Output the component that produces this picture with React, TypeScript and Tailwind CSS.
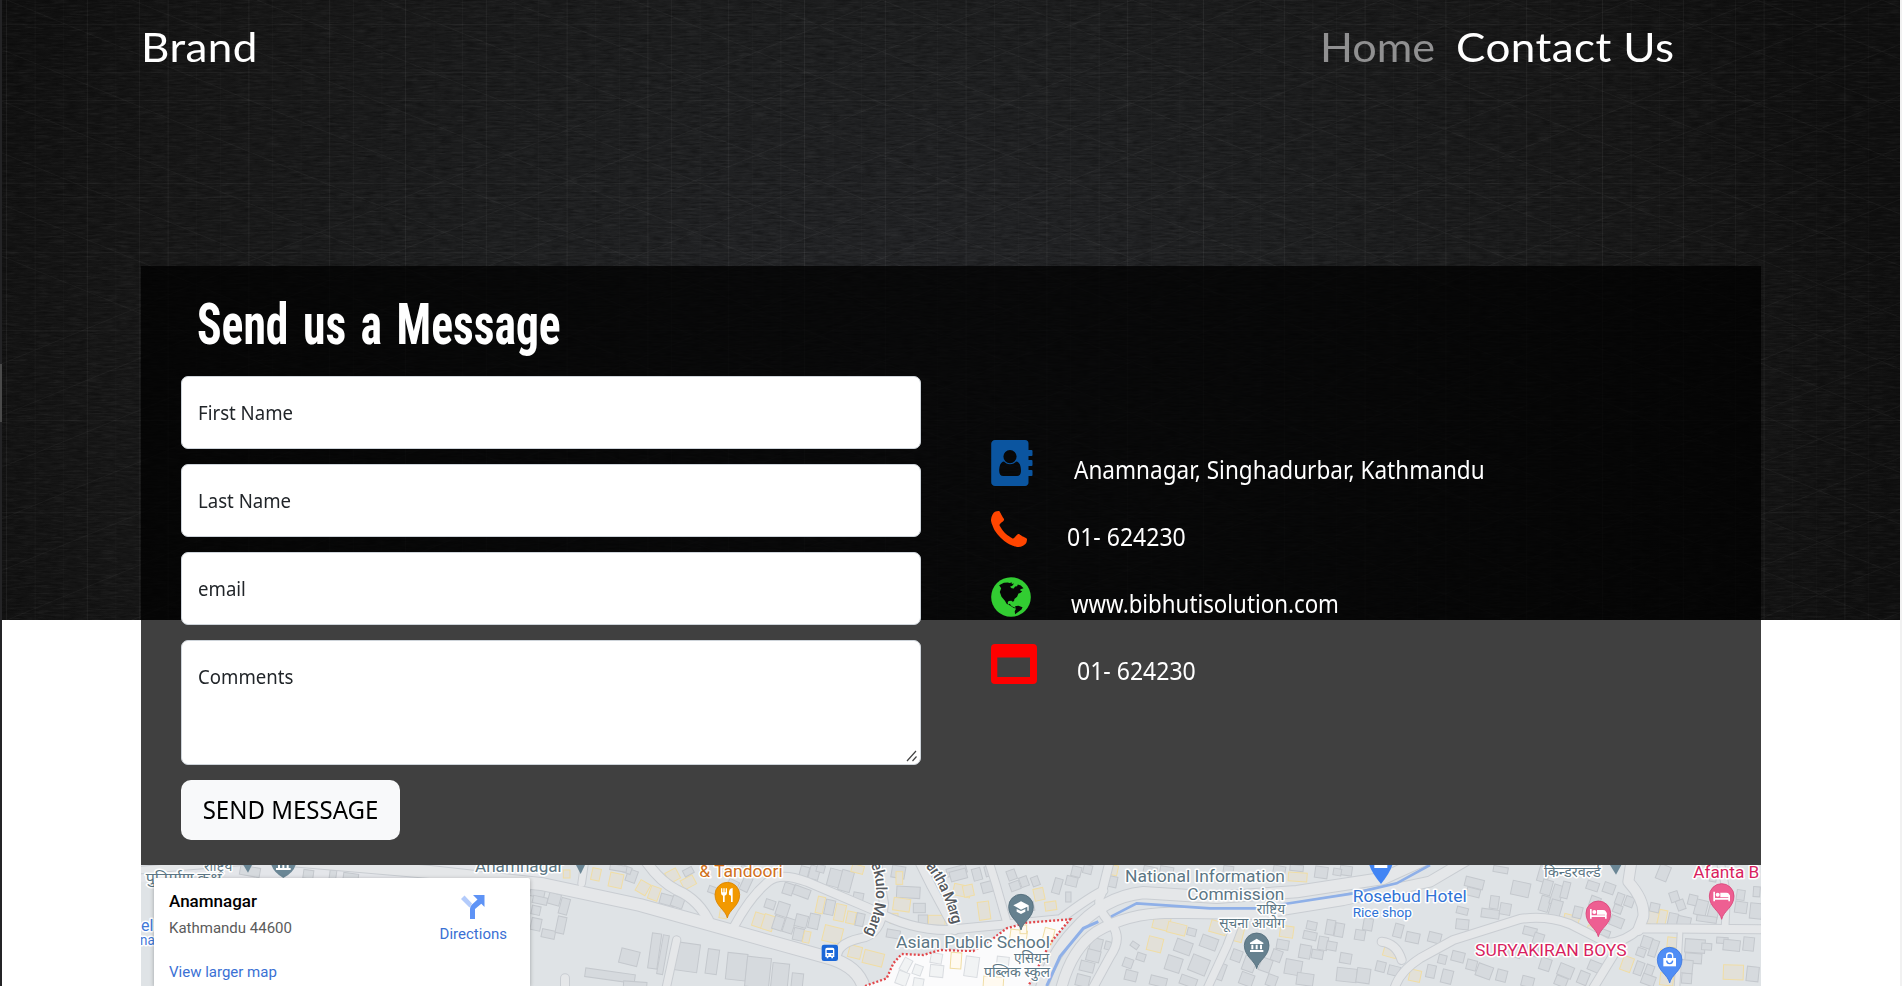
import React from "react";

/* ---------- hero backdrop ---------- */

const threads = Array.from({ length: 71 }, (_, i) => ({
  x: 4 + i * 26.6 + ((i * 7) % 5),
  o: i % 3 === 0 ? 0.055 : i % 4 === 1 ? 0.035 : 0.02,
}));

const weave = Array.from({ length: 22 }, (_, i) => i * 125 - 620);

function Backdrop() {
  return (
    <svg className="block h-full w-full" viewBox="0 0 1898 620" preserveAspectRatio="none">
      <defs>
        <radialGradient id="glow" gradientUnits="userSpaceOnUse" cx="900" cy="400" r="1000" gradientTransform="translate(0 80) scale(1 0.8)">
          <stop offset="0" stopColor="#252629" />
          <stop offset="0.45" stopColor="#1e1f20" />
          <stop offset="0.8" stopColor="#171717" />
          <stop offset="1" stopColor="#101010" />
        </radialGradient>
        <filter id="grain" x="0" y="0" width="100%" height="100%">
          <feTurbulence type="fractalNoise" baseFrequency="0.06 0.55" numOctaves="3" seed="4" />
          <feColorMatrix values="0 0 0 0 1  0 0 0 0 1  0 0 0 0 1  1.6 0 0 0 -0.7" />
        </filter>
        <filter id="shade" x="0" y="0" width="100%" height="100%">
          <feTurbulence type="fractalNoise" baseFrequency="0.08 0.5" numOctaves="3" seed="11" />
          <feColorMatrix values="0 0 0 0 0  0 0 0 0 0  0 0 0 0 0  1.6 0 0 0 -0.7" />
        </filter>
      </defs>
      <rect width="1898" height="620" fill="url(#glow)" />
      <rect width="1898" height="620" filter="url(#grain)" opacity="0.06" />
      <rect width="1898" height="620" filter="url(#shade)" opacity="0.4" />
      {threads.map((t) => (
        <rect key={t.x} x={t.x} y="0" width="1" height="620" fill="#fff" opacity={t.o} />
      ))}
      {[24, 72, 100, 183, 197, 252, 330, 420, 512].map((y) => (
        <rect key={y} y={y} width="1898" height="1" fill="#fff" opacity="0.03" />
      ))}
      <g stroke="#fff" strokeWidth="1" opacity="0.03">
        {weave.map((x) => (
          <g key={x}>
            <line x1={x} y1="0" x2={x + 1500} y2="620" />
            <line x1={x} y1="620" x2={x + 1500} y2="0" />
          </g>
        ))}
      </g>
    </svg>
  );
}

/* ---------- contact icons ---------- */

function BookIcon() {
  return (
    <svg className="h-[46px] w-[42px]" viewBox="0 0 42 46">
      <path
        fill="#0b55a0"
        fillRule="evenodd"
        d="M4 0H34a3.5 3.5 0 0 1 3.500 3.500V10H40.500a1 1 0 0 1 1 1V15a1 1 0 0 1-1 1H37.500V20H40.500a1 1 0 0 1 1 1V25a1 1 0 0 1-1 1H37.500V30H40.500a1 1 0 0 1 1 1V35a1 1 0 0 1-1 1H37.500V42A3.500 3.500 0 0 1 34 46H4A3.800 3.800 0 0 1 .2 42V4A3.800 3.800 0 0 1 4 0ZM19 10a6.600 6.600 0 1 0 0 13.200A6.600 6.600 0 0 0 19 10ZM13 21.500C9.500 22 8.200 26 8.200 31c0 3 1.500 5 4 5H26c2.500 0 4-2 4-5 0-5-1.300-9-4.800-9.500C23.800 23 21.800 24.300 19 24.300S14.400 23 13 21.500Z"
      />
    </svg>
  );
}

function PhoneIcon() {
  return (
    <svg className="h-[36px] w-[36px]" viewBox="0 128 1408 1408">
      <path
        fill="#ff4500"
        transform="translate(0 128)"
        d="M1408 1112q0 27-10 70.500t-21 68.500q-21 50-122 106-94 51-186 51-27 0-53-3.500t-57.500-12.500-47-14.500-55.500-20.500-49-18q-98-35-175-83-127-79-264-216t-216-264q-48-77-83-175-3-9-18-49t-20.500-55.500-14.500-47-12.500-57.500-3.500-53q0-92 51-186 56-101 106-122 25-11 68.500-21t70.500-10q14 0 21 3 18 6 53 76 11 19 30 54t35 63.500 31 53.500q3 4 17.500 25t21.500 35.500 7 28.500q0 20-28.500 50t-62 55-62 53-28.500 46q0 9 5 22.500t8.500 20.500 14 24 11.500 19q76 137 174 235t235 174q2 1 19 11.500t24 14 20.500 8.500 22.500 5q18 0 46-28.500t53-62 55-62 50-28.500q14 0 28.500 7t35.500 21.500 25 17.500q25 15 53.500 31t63.500 35 54 30q70 35 76 53 3 7 3 21z"
      />
    </svg>
  );
}

function GlobeIcon() {
  return (
    <svg className="h-[40px] w-[40px]" viewBox="0 0 118 118">
      <circle cx="59" cy="59" r="58.500" fill="#32cd32" />
      <path
        fill="#070707"
        d="M24 24l14-7 12-1 4 2 8-2-1 5 7-2-5 7-7 3 5 4 6 1 4-6 6-1 2-5 9 3 8 8-9 3-1 4 6 2-6 5-5 2-4 9-8 7-1 6-4 2-4-3-8 1-3 5 2 5 5-2 2 4 6 5 5 1 3 4-6-2-10-7-10-5-5-9-10-12-5-14 4-11z M71 86l10-1 12 4-3 7-11 8-8 6-1-9 3-6z"
      />
    </svg>
  );
}

function WindowIcon() {
  return (
    <svg className="h-[40px] w-[46px]" viewBox="0 0 46 40">
      <path fill="#f00" fillRule="evenodd" d="M4 0H42a4 4 0 0 1 4 4V36a4 4 0 0 1-4 4H4a4 4 0 0 1-4-4V4A4 4 0 0 1 4 0ZM6.300 13.500V33H39V13.500Z" />
    </svg>
  );
}

/* ---------- map ---------- */

const roads: { d: string; w: number }[] = [
  { d: "M33 60 L400 30", w: 20 },
  { d: "M480 30 L900 66 L1240 103 L1530 165 L1780 235 L2090 322 Q2195 350 2205 430", w: 36 },
  { d: "M1365 30 L1355 100", w: 20 },
  { d: "M1545 30 Q1590 95 1640 120 Q1710 150 1742 225", w: 28 },
  { d: "M1812 230 Q1860 140 1915 95 Q1950 65 2030 95 L2230 180 Q2340 240 2450 240 L2600 226 L2790 208 Q2880 140 2920 122", w: 24 },
  { d: "M2240 30 L2262 160 Q2255 255 2190 265 Q2120 280 2120 325", w: 24 },
  { d: "M2365 30 L2405 110 L2475 240", w: 24 },
  { d: "M2575 30 L2600 110 L2630 215", w: 22 },
  { d: "M2730 430 Q2760 320 2830 245 Q2920 140 3040 128 L3260 142 L3500 125 L3760 85 L3880 30", w: 34 },
  { d: "M2790 430 Q2820 300 2900 245 Q2990 190 3120 188 L3380 192 L3640 150 L3900 95 L4010 30", w: 30 },
  { d: "M2940 30 L2915 130 Q2890 170 2950 230 Q2975 270 2940 320 L2880 430", w: 24 },
  { d: "M3320 210 L3290 290 L3225 430", w: 22 },
  { d: "M3755 275 Q3800 280 3815 330", w: 24 },
  { d: "M3790 430 Q3800 370 3870 325 L3970 270 L4170 207 Q4250 195 4320 222 L4430 278 Q4480 280 4530 235 L4893 238", w: 24 },
  { d: "M4505 30 L4495 95 Q4545 150 4540 200 L4525 240", w: 30 },
  { d: "M4475 275 L4380 430", w: 24 },
  { d: "M4785 238 L4790 130 L4770 30", w: 20 },
  { d: "M4640 430 L4650 250", w: 14 },
  { d: "M1640 270 L1605 430", w: 22 },
  { d: "M1305 385 L1305 430", w: 24 },
  { d: "M2460 310 L2455 380", w: 24 },
  { d: "M2510 310 L2515 430", w: 30 },
];

// x, y, width, height, rotation, 1 = yellow commercial block
type Block = [number, number, number, number, number, number?];

const blocks: Block[] = [
  [330, 50, 60, 28, 10], [520, 60, 30, 26, 8], [598, 60, 20, 40, 8], [640, 70, 45, 20, 8],
  [1200, 115, 44, 26, 12], [1208, 140, 44, 22, 12], [1205, 168, 26, 26, 12], [1255, 130, 36, 34, 15], [1290, 145, 26, 48, 15], [1203, 205, 30, 36, 12], [1235, 240, 40, 24, 12], [1280, 200, 26, 50, 12], [1300, 60, 20, 24, 0, 1],
  [1385, 55, 26, 36, 12, 1], [1438, 70, 40, 42, 12, 1], [1490, 60, 30, 36, 20], [1522, 95, 34, 36, 30, 1], [1558, 110, 30, 40, 20, 1], [1480, 50, 24, 20, 20], [1590, 135, 46, 30, 15], [1625, 140, 36, 32, 20], [1440, 45, 50, 18, 10],
  [1610, 60, 36, 34, -28, 1], [1655, 82, 40, 30, -28, 1], [1660, 55, 30, 20, -28], [1735, 110, 26, 20, 20], [1790, 90, 32, 40, 25], [1835, 80, 26, 44, 25], [1770, 165, 24, 40, 10, 1], [1830, 50, 34, 26, 25],
  [2010, 50, 26, 30, 15], [2038, 48, 30, 40, 15], [2095, 58, 38, 52, 15], [2130, 62, 36, 62, 15], [2165, 45, 36, 24, 15, 1], [2170, 128, 30, 24, 10], [2060, 45, 24, 22, 15],
  [1960, 100, 30, 34, 18], [1990, 112, 50, 28, 20], [1905, 150, 30, 26, 18], [1940, 158, 36, 40, 18], [1870, 190, 36, 42, 18, 1], [1898, 195, 34, 46, 18, 1], [1930, 200, 30, 40, 18], [1962, 205, 30, 44, 18], [1996, 195, 36, 36, 14], [1990, 235, 30, 36, 12], [2020, 244, 20, 34, 12, 1], [2060, 140, 22, 50, 12, 1], [2085, 150, 28, 44, 12], [2115, 163, 30, 50, 12, 1], [2037, 192, 30, 44, 12], [2150, 185, 26, 36, 12, 1], [2178, 190, 24, 38, 12], [2080, 230, 56, 48, 14, 1], [2156, 288, 38, 36, 14, 1], [2200, 305, 60, 40, 14, 1],
  [1560, 250, 28, 106, 8], [1590, 255, 18, 118, 10], [1470, 300, 56, 44, 14], [1365, 364, 150, 26, 8], [1638, 280, 68, 84, 8], [1730, 298, 34, 74, 8], [1790, 310, 60, 80, 6], [1848, 322, 72, 90, 6], [1925, 340, 50, 80, 6], [1984, 370, 34, 60, 6], [1480, 395, 70, 30, 4],
  [2285, 48, 40, 36, 10], [2298, 65, 20, 38, 0, 1], [2300, 110, 70, 34, 3], [2290, 145, 50, 38, 8, 1], [2350, 160, 36, 28, 0], [2280, 190, 24, 30, 0, 1], [2365, 195, 28, 34, 0], [2395, 196, 50, 34, 0, 1], [2270, 240, 40, 24, 10], [2405, 55, 20, 30, -15], [2450, 50, 60, 24, -15], [2470, 105, 52, 34, 12, 1], [2460, 60, 50, 30, -15],
  [2528, 55, 26, 36, -15], [2555, 95, 36, 32, -15], [2545, 155, 34, 54, -8, 1], [2500, 105, 30, 34, -12, 1], [2565, 48, 22, 30, -15], [2632, 60, 26, 30, -20], [2640, 95, 30, 26, -20], [2670, 80, 24, 30, -20], [2705, 80, 22, 28, -20], [2712, 115, 30, 36, -12, 1], [2745, 155, 34, 26, -8, 1], [2770, 85, 24, 46, 16], [2825, 50, 28, 30, 14], [2808, 80, 34, 28, 14], [2807, 126, 16, 30, 0], [2690, 155, 22, 28, -12], [2860, 45, 26, 26, 14],
  [2935, 45, 28, 30, 12, 1], [2925, 78, 36, 32, 12], [3040, 50, 40, 26, 12], [3090, 50, 40, 24, 10], [3430, 48, 36, 24, 10], [3475, 68, 56, 26, 4, 1], [3555, 50, 38, 34, 8], [3630, 48, 36, 28, 8], [3280, 48, 30, 26, 8], [3480, 45, 40, 18, 6], [3610, 56, 24, 20, 10],
  [3070, 195, 50, 44, 14, 1], [3112, 220, 56, 32, 14, 1], [3172, 235, 26, 22, 14], [3053, 262, 44, 42, 14, 1], [3135, 272, 50, 38, 20], [3108, 320, 46, 44, 18], [3180, 320, 54, 50, 22], [3212, 260, 50, 36, 20], [3240, 215, 50, 36, 16, 1], [3310, 225, 30, 50, 14, 1], [3260, 340, 24, 50, 20], [3002, 278, 24, 16, 35], [3020, 310, 26, 22, 18], [2980, 325, 28, 28, 20], [2985, 362, 36, 30, 14], [3060, 380, 50, 28, 14], [3150, 380, 50, 28, 20],
  [2880, 265, 36, 40, 14], [2870, 300, 40, 34, 14], [2850, 335, 42, 30, 14], [2838, 375, 40, 34, 14], [2925, 275, 20, 24, 14], [3305, 300, 30, 34, 20], [3340, 320, 36, 44, 20], [3390, 325, 34, 40, 20], [3425, 300, 30, 34, 20], [3330, 370, 40, 36, 20], [3410, 375, 30, 34, 20], [3465, 330, 50, 44, 10], [3450, 228, 40, 34, 8, 1], [3500, 370, 50, 36, 8], [3440, 270, 36, 28, 10],
  [3530, 215, 30, 24, 12], [3520, 245, 40, 24, 12], [3565, 260, 28, 40, 10], [3588, 210, 26, 44, 10], [3615, 220, 26, 40, 10], [3508, 285, 34, 40, 10], [3545, 300, 34, 26, 10], [3630, 310, 34, 30, 10], [3620, 355, 60, 40, 6], [3675, 240, 30, 30, 10], [3700, 205, 28, 36, 10], [3680, 355, 40, 44, 8], [3590, 275, 30, 26, 10],
  [4005, 85, 56, 28, 14], [4010, 115, 40, 24, 14], [4080, 138, 26, 38, 8], [4054, 178, 54, 26, 8], [4110, 160, 32, 34, 10], [4145, 96, 54, 42, 12], [4090, 50, 44, 18, 10], [4225, 50, 32, 46, 16], [4235, 90, 30, 44, 16], [4230, 138, 28, 46, 16], [4265, 105, 30, 60, 18], [4295, 95, 22, 50, 14], [4260, 150, 34, 50, 16], [3980, 172, 34, 20, 14], [3978, 208, 38, 30, 6], [3792, 222, 26, 40, 15], [3828, 248, 40, 30, 12], [3895, 248, 38, 30, 14], [4180, 232, 40, 24, 14], [4210, 250, 30, 34, 18],
  [3760, 295, 40, 26, 16, 1], [3738, 335, 28, 30, 14], [3775, 348, 34, 28, 14], [3838, 360, 34, 34, 12, 1], [3890, 345, 26, 38, 12], [3925, 315, 24, 26, 14], [3935, 360, 32, 40, 14], [3965, 305, 38, 30, 14], [4040, 345, 46, 38, 20], [4010, 330, 30, 30, 14], [4100, 360, 30, 34, 14], [4175, 380, 36, 30, 14], [4130, 290, 44, 30, 18], [4230, 325, 32, 36, 18], [4285, 345, 44, 36, 22], [4275, 380, 36, 28, 22], [4345, 365, 30, 38, 22], [4375, 335, 40, 30, 22], [4190, 290, 34, 28, 14],
  [4300, 195, 46, 34, 14, 1], [4330, 170, 26, 34, 14], [4370, 230, 36, 24, 20, 1], [4440, 200, 40, 30, 22], [4370, 95, 36, 26, 18], [4420, 100, 34, 30, 20], [4458, 130, 22, 34, 20], [4485, 140, 26, 30, 20], [4380, 140, 30, 30, 20], [4450, 165, 26, 24, 20], [4410, 240, 30, 18, 20],
  [4535, 260, 30, 34, 18], [4560, 270, 22, 50, 18], [4520, 295, 26, 24, 20], [4475, 320, 32, 44, 20, 1], [4515, 335, 24, 40, 20], [4545, 345, 24, 38, 20], [4535, 375, 40, 30, 20], [4612, 262, 30, 30, 6, 1], [4590, 300, 34, 30, 10, 1], [4590, 370, 40, 36, 6, 1],
  [4583, 45, 34, 46, 22], [4620, 125, 26, 30, -18], [4640, 150, 24, 30, -20], [4548, 185, 36, 38, 14, 1], [4585, 180, 24, 48, 12, 1], [4615, 190, 28, 36, 12], [4642, 200, 40, 28, 12], [4560, 160, 28, 26, 12], [4695, 150, 36, 46, 14], [4735, 165, 30, 44, 14], [4675, 135, 26, 30, 14], [4700, 198, 60, 18, 8], [4820, 120, 24, 30, 8], [4815, 155, 36, 34, 8], [4860, 160, 36, 46, 6], [4870, 110, 20, 30, 4], [4740, 65, 20, 30, 10],
  [4665, 268, 60, 40, 4], [4665, 310, 50, 30, 4], [4650, 330, 38, 40, 6], [4655, 370, 30, 30, 4], [4760, 262, 34, 18, 4], [4780, 270, 50, 32, 6], [4840, 262, 32, 40, 6], [4780, 345, 60, 44, 2, 1], [4850, 350, 36, 44, 6], [4715, 280, 30, 20, 4],
];

const whiteBlocks: Block[] = [
  [2315, 325, 26, 40, 28], [2350, 345, 26, 30, 20], [2300, 365, 34, 40, 20], [2402, 310, 34, 30, 10], [2400, 345, 40, 36, 6], [2462, 308, 32, 48, 4, 1], [2505, 320, 40, 60, 8], [2640, 240, 50, 40, 8, 1], [2740, 235, 30, 46, 14, 1], [2560, 380, 60, 40, 4, 1], [2350, 385, 30, 30, 10], [2600, 320, 36, 40, 6], [2670, 225, 20, 26, 0, 1],
];

function Blocks({ items, light }: { items: Block[]; light?: boolean }) {
  return (
    <>
      {items.map(([x, y, w, h, r, c], i) => (
        <rect
          key={i}
          x={x}
          y={y}
          width={w}
          height={h}
          transform={`rotate(${r} ${x + w / 2} ${y + h / 2})`}
          fill={light ? (c ? "#fffaf0" : "#f1f3f4") : c ? "#e2e0d8" : "#d6dade"}
          stroke={c ? "#f0dda4" : light ? "#d9dce0" : "#c4c8cd"}
          strokeWidth="3"
        />
      ))}
    </>
  );
}

const glyphs: Record<string, React.ReactNode> = {
  food: (
    <g fill="#fff">
      <path d="M-19-19h4v12h3v-12h4v12h3v-12h4V-5q0 6-7 8V22h-5V3q-6-2-6-8Z" />
      <path d="M5 0q-2-19 11-20V22H11V3Z" />
    </g>
  ),
  school: <path fill="#fff" d="M-23-4L0-16 23-4V12H19V0L0 9ZM-13 7V15L0 22 13 15V7L0 13Z" />,
  museum: <path fill="#fff" d="M-20-8L0-20 20-8V-4H-20ZM-16-2H-10V12H-16ZM-3-2H3V12H-3ZM10-2H16V12H10ZM-20 14H20V20H-20Z" />,
  bed: (
    <g fill="#fff">
      <path d="M-25-13H-20V6H20V-2H25V16H20V11H-20V16H-25Z" />
      <circle cx="-12" cy="-4" r="6" />
      <path d="M-4 4V-10H14Q25-10 25 4Z" />
    </g>
  ),
  bag: (
    <g>
      <path fill="#fff" d="M-19-5H19V20H-19Z" />
      <path fill="none" stroke="#fff" strokeWidth="4" d="M-9-5V-12Q-9-20 0-20T9-12V-5" />
      <path fill="none" stroke="#4285f4" strokeWidth="4" d="M-9 3Q-8 12 0 12T9 3" />
    </g>
  ),
};

function Pin({ x, y, color, edge, glyph }: { x: number; y: number; color: string; edge: string; glyph: string }) {
  return (
    <g transform={`translate(${x} ${y})`}>
      <path d="M0 70C-5 45-37 34-37 0A37 37 0 0 1 37 0C37 34 5 45 0 70Z" fill={color} stroke={edge} strokeWidth="2.500" />
      {glyphs[glyph]}
    </g>
  );
}

function Label({ x, y, w, size = 50, color = "#5b7684", children }: { x: number; y: number; w: number; size?: number; color?: string; children: string }) {
  return (
    <text
      x={x}
      y={y}
      textLength={w}
      lengthAdjust="spacingAndGlyphs"
      fontSize={size}
      fill={color}
      stroke="#fff"
      strokeWidth="9"
      strokeLinejoin="round"
      paintOrder="stroke"
    >
      {children}
    </text>
  );
}

function MapCanvas() {
  return (
    <svg className="block h-[121px] w-[1620px] font-['Roboto','Noto_Sans',sans-serif]" viewBox="33 45 4860 363">
      <rect x="33" y="45" width="4860" height="363" fill="#dfe3e6" />
      <rect x="33" y="45" width="1200" height="50" fill="#e4e6ea" />
      <Blocks items={blocks} />
      <g fill="none" strokeLinecap="round" strokeLinejoin="round">
        {roads.map((r, i) => (
          <path key={i} d={r.d} stroke="#c9cdd2" strokeWidth={r.w + 6} />
        ))}
        {roads.map((r, i) => (
          <path key={i} d={r.d} stroke="#e5e7e9" strokeWidth={r.w} />
        ))}
      </g>
      <path d="M2205 408 L2270 385 L2290 340 L2315 312 L2380 315 L2430 300 L2530 303 L2590 265 L2630 235 L2690 218 L2820 208 L2760 280 L2730 340 L2695 408 Z" fill="#fbfbfc" />
      <Blocks items={whiteBlocks} light />
      <path
        d="M2205 408 L2270 385 L2290 340 L2315 312 L2380 315 L2430 300 L2530 303 L2590 265 L2630 235 L2690 218 L2820 208 L2760 280 L2730 340 L2695 408"
        fill="none"
        stroke="#e2474b"
        strokeWidth="7"
        strokeDasharray="6 6"
      />
      <path d="M2750 408 L2790 320 L2860 235 L2905 215" fill="none" stroke="#8fb0e8" strokeWidth="9" />
      <path d="M2943 200 L3020 160 L3240 175 L3380 175 L3670 130 L3800 100 L3900 45" fill="none" stroke="#8fb0e8" strokeWidth="8" />

      <path d="M340 45H366L354 68Z" fill="#6a8695" />
      <path d="M424 45H497Q490 68 460 84Q432 68 424 45Z" fill="#6a8695" />
      <path d="M444 45V54H438V60H482V54H476V45H470V54H463V45H457V54H450V45Z" fill="#fff" />
      <path d="M1338 45H1365L1352 72Z" fill="#6a8695" />
      <path d="M4440 45H4474L4458 74Z" fill="#6a8695" />
      <path d="M3718 45H3787Q3780 68 3753 102Q3725 68 3718 45Z" fill="#4285f4" />
      <path d="M3733 45H3772V54H3733Z" fill="#fff" />

      <Label x={222} y={63} w={85} size={42}>राष्ट्रिय</Label>
      <Label x={47} y={100} w={228} size={42}>पुनिर्माण कक्ष</Label>
      <Label x={1035} y={66} w={265}>Anamnagar</Label>
      <Label x={33} y={242} w={62} color="#3f78d8">els</Label>
      <Label x={30} y={285} w={44} size={42} color="#3f78d8">na</Label>
      <Label x={1708} y={80} w={250} color="#d0701a">{"& Tandoori"}</Label>
      <Label x={2298} y={295} w={462}>Asian Public School</Label>
      <Label x={2652} y={340} w={106} size={42}>एसियन</Label>
      <Label x={2562} y={380} w={198} size={42}>पब्लिक स्कुल</Label>
      <Label x={2985} y={97} w={480}>National Information</Label>
      <Label x={3172} y={150} w={291}>Commission</Label>
      <Label x={3380} y={193} w={85} size={42}>राष्ट्रिय</Label>
      <Label x={3268} y={234} w={197} size={42}>सूचना आयोग</Label>
      <Label x={3668} y={157} w={342} color="#2f72d6">Rosebud Hotel</Label>
      <Label x={3668} y={200} w={178} size={40} color="#2f72d6">Rice shop</Label>
      <Label x={4242} y={82} w={170} size={42}>किन्डरवर्ल्ड</Label>
      <Label x={4035} y={317} w={455} color="#d81f60">SURYAKIRAN BOYS</Label>
      <Label x={4690} y={84} w={198} color="#d81f60">Afanta B</Label>

      <path id="ekulo" d="M2222 42 Q2262 135 2203 258" fill="none" />
      <path id="artha" d="M2386 50 Q2440 110 2470 232" fill="none" />
      <g fontSize="46" fontWeight="500" fill="#55595e" stroke="#fff" strokeWidth="9" strokeLinejoin="round" paintOrder="stroke">
        <text>
          <textPath href="#ekulo" textLength="218">ekulo Marg</textPath>
        </text>
        <text>
          <textPath href="#artha" textLength="194">artha Marg</textPath>
        </text>
      </g>

      <g transform="translate(2075 284)">
        <rect width="49" height="49" rx="7" fill="#1a67d8" />
        <path fill="#fff" fillRule="evenodd" d="M16 9H33Q38 9 38 14V37H34V41H29V37H20V41H15V37H11V14Q11 9 16 9ZM15 16V25H34V16ZM16 29V33H20V29ZM29 29V33H33V29Z" />
      </g>
      <Pin x={1792} y={134} color="#f29900" edge="#d98200" glyph="food" />
      <Pin x={2673} y={170} color="#66818f" edge="#4f6a78" glyph="school" />
      <Pin x={3380} y={286} color="#66818f" edge="#4f6a78" glyph="museum" />
      <Pin x={4405} y={190} color="#ee5f92" edge="#d84378" glyph="bed" />
      <Pin x={4775} y={138} color="#ee5f92" edge="#d84378" glyph="bed" />
      <Pin x={4619} y={329} color="#4f8df5" edge="#3b76df" glyph="bag" />
    </svg>
  );
}

function PlaceCard() {
  return (
    <div className="absolute top-[13px] left-[13px] flex h-[108px] w-[376px] justify-between rounded-t-[2px] bg-white pt-[12px] pr-[23px] pl-[15px] font-['Roboto',sans-serif] shadow-[0_1px_4px_rgba(0,0,0,0.3)]">
      <div className="flex flex-col items-start whitespace-nowrap">
        <div className="text-[17px] leading-[22px] font-medium text-black">Anamnagar</div>
        <div className="mt-[6px] text-[15px] leading-[20px] text-[#5b5b5b]">Kathmandu 44600</div>
        <div className="mt-[24px] text-[15px] leading-[20px] text-[#3a70d4]">View larger map</div>
      </div>
      <div className="flex flex-col items-center pt-[5px]">
        <svg className="h-[24px] w-[24px]" viewBox="0 0 24 24">
          <path d="M3.500.5L11 8.500 8.500 12.500 0 4Z" fill="#b3cbfb" />
          <path d="M12 0H23.500V12L20.300 8.800 14 14V24H9V14Q9 11 11 9.500L16.500 4.500Z" fill="#5e93f6" />
        </svg>
        <div className="mt-[5px] text-[15px] leading-[20px] text-[#3a70d4]">Directions</div>
      </div>
    </div>
  );
}

/* ---------- page ---------- */

function Field({ label }: { label: string }) {
  return (
    <div className="flex h-[73px] items-center rounded-[7px] border border-[#ced4da] bg-white px-[16px] text-[20px] text-[#212529]">
      <span className="origin-left scale-x-[0.93]">{label}</span>
    </div>
  );
}

export default function App() {
  return (
    <div className="relative h-[986px] w-[1902px] overflow-hidden bg-white font-['Noto_Sans',sans-serif]">
      <div className="absolute inset-y-0 left-0 w-[2px] bg-[#242426]">
        <div className="mt-[364px] h-[58px] bg-[#4a4a4a]" />
      </div>
      <div className="absolute inset-y-0 right-0 w-[2px] bg-[#f1f1f1]" />
      <div className="absolute top-0 left-[2px] h-[620px] w-[1898px] bg-[#141415]">
        <Backdrop />
      </div>

      <div className="relative flex flex-col pr-[141px] pl-[141px]">
        <nav className="flex h-[266px] items-start justify-between pt-[22px] pr-[84px] font-['Lato',sans-serif] text-[40px] leading-[50px] whitespace-nowrap text-white">
          <span className="origin-left scale-x-[1.1] tracking-[0.4px]">Brand</span>
          <div className="flex">
            <span className="w-[136px] origin-left scale-x-[1.08] text-[#909091]">Home</span>
            <span className="w-[221px] origin-left scale-x-[1.1] tracking-[0.4px]">Contact Us</span>
          </div>
        </nav>

        <section className="flex h-[599px] items-start bg-black/75 pl-[40px]">
          <form className="flex w-[740px] flex-col">
            <h1 className="mt-[25px] ml-[16px] h-[85px] origin-left scale-x-[0.8] font-['Roboto',sans-serif] text-[57px] leading-[67px] font-bold [word-spacing:5px] whitespace-nowrap text-white [font-stretch:75%]">
              Send us a Message
            </h1>
            <div className="flex flex-col gap-[15px]">
              <Field label="First Name" />
              <Field label="Last Name" />
              <Field label="email" />
              <div className="relative flex h-[125px] items-start rounded-[7px] border border-[#ced4da] bg-white px-[16px] pt-[22px] text-[20px] leading-[28px] text-[#212529]">
                <span className="origin-left scale-x-[0.93]">Comments</span>
                <svg className="absolute right-[2px] bottom-[2px] h-[12px] w-[12px]" viewBox="0 0 12 12" stroke="#444" strokeWidth="1.200">
                  <path d="M1 11L10 1M6.500 11L10.500 6.500" />
                </svg>
              </div>
              <button type="button" className="flex h-[60px] w-[219px] items-center justify-center rounded-[10px] bg-[#f8f9fa] text-[25px] whitespace-nowrap text-black">
                <span className="scale-x-[0.96]">SEND MESSAGE</span>
              </button>
            </div>
          </form>

          <div className="ml-[70px] flex flex-col pt-[174px] text-[24.5px] leading-[34px] whitespace-nowrap text-white">
            <div className="flex h-[67px]">
              <div className="w-[83px] shrink-0">
                <BookIcon />
              </div>
              <span className="mt-[13px] h-[34px] origin-left scale-x-[0.92]">Anamnagar, Singhadurbar, Kathmandu</span>
            </div>
            <div className="flex h-[67px]">
              <div className="mt-[3.5px] w-[76px] shrink-0">
                <PhoneIcon />
              </div>
              <span className="mt-[13px] h-[34px] origin-left scale-x-[0.94]">01- 624230</span>
            </div>
            <div className="flex h-[67px]">
              <div className="mt-[3px] w-[80px] shrink-0">
                <GlobeIcon />
              </div>
              <span className="mt-[13px] h-[34px] origin-left scale-x-[0.91]">www.bibhutisolution.com</span>
            </div>
            <div className="flex h-[67px]">
              <div className="mt-[3px] w-[86px] shrink-0">
                <WindowIcon />
              </div>
              <span className="mt-[13px] h-[34px] origin-left scale-x-[0.94]">01- 624230</span>
            </div>
          </div>
        </section>

        <section className="relative h-[121px] w-[1620px] overflow-hidden">
          <MapCanvas />
          <PlaceCard />
        </section>
      </div>
    </div>
  );
}
